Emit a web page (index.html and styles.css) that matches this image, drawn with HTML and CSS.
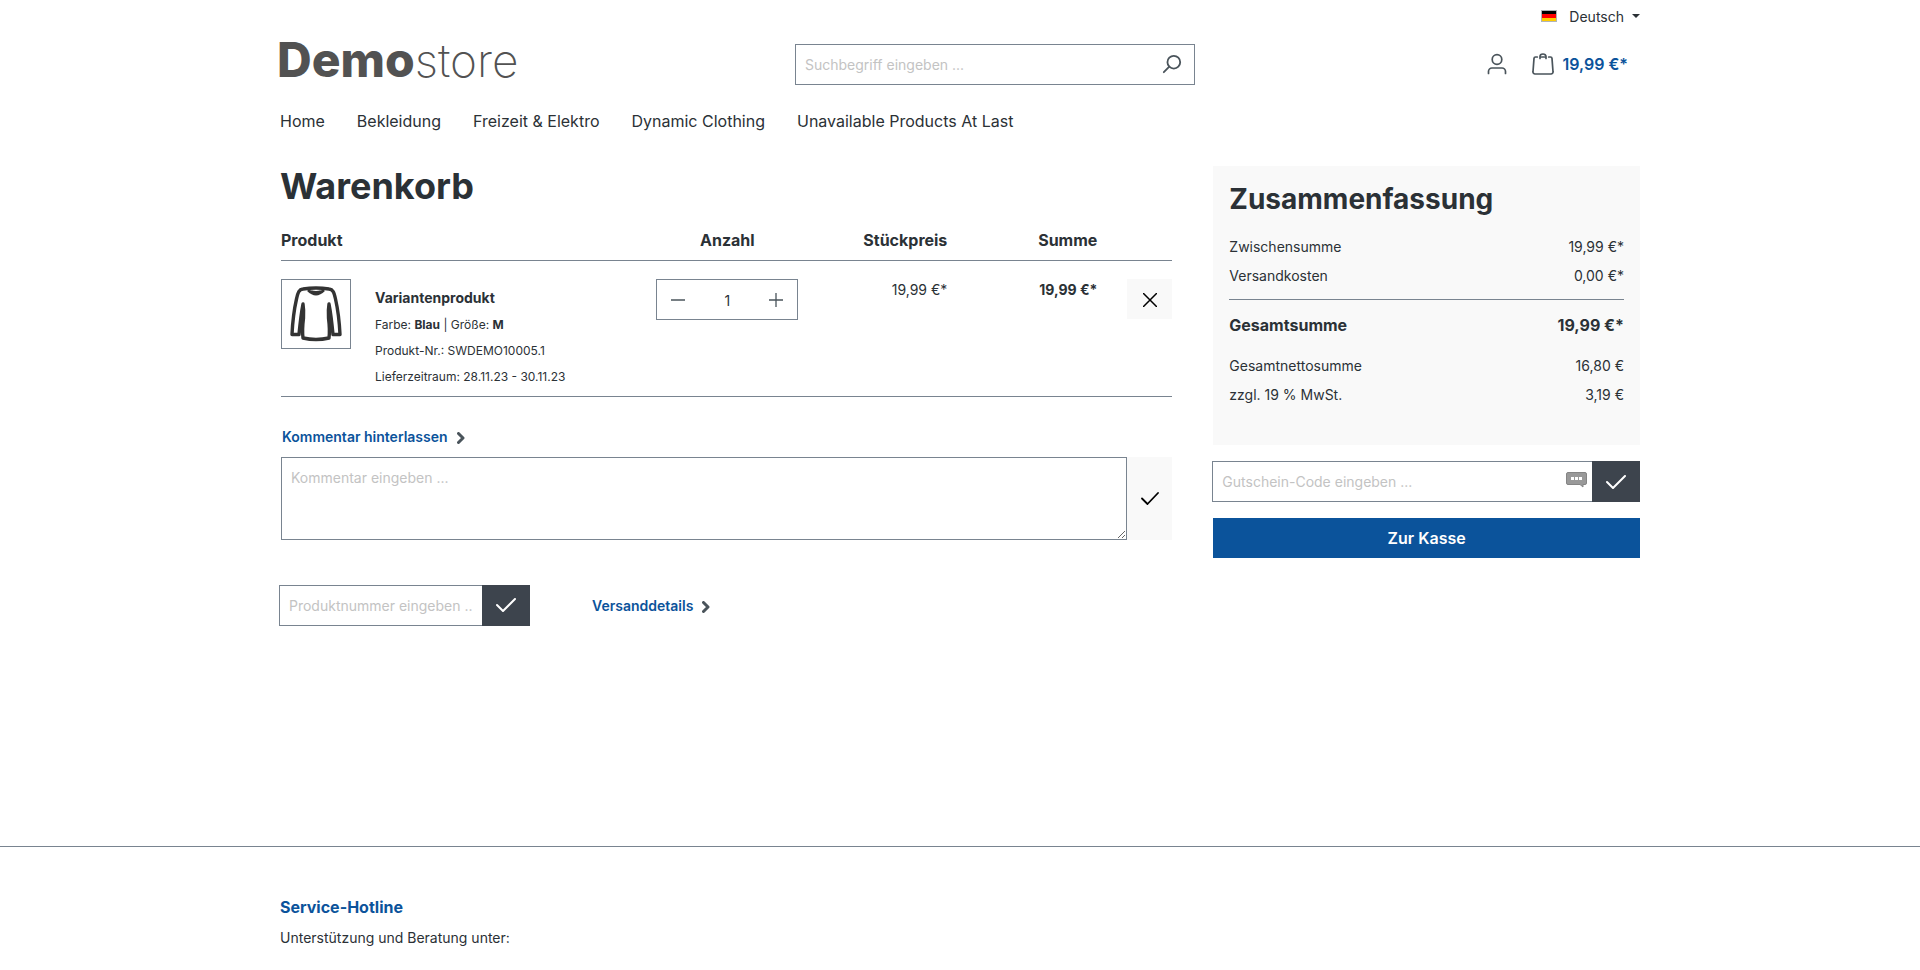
FILE: index.html
```html
<!DOCTYPE html>
<html lang="de">
<head>
<meta charset="utf-8">
<title>Warenkorb</title>
<meta name="viewport" content="width=device-width, initial-scale=1">
<link rel="stylesheet" href="styles.css">
</head>
<body>
<header class="container header">
  <div class="top-bar">
    <button class="language" type="button">
      <svg class="flag" viewBox="0 0 16 12" width="16" height="12" aria-hidden="true"><path fill="#b0b4b8" d="M0 0h16v12H0z"/><path d="M1 1h14v3H1z"/><path fill="#f00" d="M1 4h14v4H1z"/><path fill="#fc0" d="M1 8h14v3H1z"/></svg>
      <span>Deutsch</span>
      <span class="caret"></span>
    </button>
  </div>
  <div class="header-row">
    <a class="logo" href="#"><b>Demo</b>store</a>
    <form class="search" role="search">
      <input type="search" placeholder="Suchbegriff eingeben ..." aria-label="Suchbegriff">
      <button type="button" aria-label="Suchen">
        <svg class="stroke" viewBox="0 0 22 22" width="22" height="22" stroke-width="2"><circle cx="13" cy="9" r="7"/><path d="M8 14l-6 6"/></svg>
      </button>
    </form>
    <div class="actions">
      <button class="account" type="button" aria-label="Mein Konto">
        <svg class="stroke" viewBox="0 0 22 22" width="22" height="22" stroke-width="1.700"><circle cx="11" cy="6.500" r="4.800"/><path d="M2.500 20.500v-2a3.500 3.500 0 0 1 3.500-3.500h10a3.500 3.500 0 0 1 3.500 3.500v2"/></svg>
      </button>
      <a class="cart-link" href="#">
        <svg class="stroke" viewBox="0 0 22 22" width="22" height="22" stroke-width="1.700"><path d="M5.300 4H3.500a1.500 1.500 0 0 0-1.500 1.400l-1 13.300A2 2 0 0 0 3 21h16a2 2 0 0 0 2-2.300L20 5.400a1.500 1.500 0 0 0-1.500-1.400h-1.800M8 5.500V3.600a3 2.600 0 0 1 6 0v1.900M9.500 4h3"/></svg>
        <span>19,99 €*</span>
      </a>
    </div>
  </div>
  <nav class="nav">
    <a href="#">Home</a>
    <a href="#">Bekleidung</a>
    <a href="#">Freizeit &amp; Elektro</a>
    <a href="#">Dynamic Clothing</a>
    <a href="#">Unavailable Products At Last</a>
  </nav>
</header>

<main class="checkout">
  <section class="cart">
    <h1>Warenkorb</h1>
    <table class="items">
      <colgroup><col><col class="col-quantity"><col class="col-unit"><col class="col-total"><col class="col-remove"></colgroup>
      <thead>
        <tr><th>Produkt</th><th class="center">Anzahl</th><th class="right">Stückpreis</th><th class="right">Summe</th><td></td></tr>
      </thead>
      <tbody>
        <tr>
          <td>
            <div class="product">
              <a class="thumb" href="#" aria-label="Variantenprodukt">
                <svg viewBox="0 0 68 68" width="68" height="68" fill="none" stroke="#333" stroke-width="3.400" stroke-linejoin="round"><path d="M21 24C19 34 18 44 17 54.500H10C10.500 44 12 30 14.500 19 16 12 17 9.500 21 9q13-2 26 0c4 .5 5 3 6.500 10C56 30 57.500 44 58 54.500H51C50 44 49 34 47 24q-1 6-.5 14 1.500 12 .5 20-13 3-26 0-1-8 .5-20 .5-8-.5-14z"/><path d="M26 10q8 8 16 0M29 11.500q5 1.500 10 0" stroke-width="2.600"/></svg>
              </a>
              <div class="details">
                <a class="name" href="#">Variantenprodukt</a>
                <p>Farbe: <b>Blau</b> | Größe: <b>M</b></p>
                <p>Produkt-Nr.: SWDEMO10005.1</p>
                <p>Lieferzeitraum: 28.11.23 - 30.11.23</p>
              </div>
            </div>
          </td>
          <td>
            <div class="quantity">
              <button type="button" aria-label="Menge verringern"><svg class="stroke" viewBox="0 0 14 14" width="14" height="14" stroke-width="1.300"><path d="M0 7h14"/></svg></button>
              <input type="text" inputmode="numeric" value="1" aria-label="Anzahl">
              <button type="button" aria-label="Menge erhöhen"><svg class="stroke" viewBox="0 0 14 14" width="14" height="14" stroke-width="1.300"><path d="M0 7h14M7 0v14"/></svg></button>
            </div>
          </td>
          <td class="right price">19,99 €*</td>
          <td class="right price total">19,99 €*</td>
          <td class="right"><button class="remove" type="button" aria-label="Entfernen"><svg viewBox="0 0 14 14" width="14" height="14" fill="none" stroke="#000" stroke-width="1.500" stroke-linecap="round"><path d="M.5.500l13 13M13.500.500l-13 13"/></svg></button></td>
        </tr>
      </tbody>
    </table>

    <form class="comment">
      <label class="toggle" for="comment">Kommentar hinterlassen
        <svg class="chevron" viewBox="0 0 8 12" width="8" height="12"><path d="M1.500 1.500L6 6l-4.500 4.500"/></svg>
      </label>
      <div class="comment-row">
        <textarea id="comment" placeholder="Kommentar eingeben ..."></textarea>
        <button type="button" aria-label="Kommentar speichern"><svg viewBox="0 0 18 13" width="18" height="13" fill="none" stroke="#000" stroke-width="1.800" stroke-linecap="round" stroke-linejoin="round"><path d="M1 6.500l5.500 5.500L17 1"/></svg></button>
      </div>
    </form>

    <div class="cart-actions">
      <form class="code-form add-product">
        <input type="text" placeholder="Produktnummer eingeben ..." aria-label="Produktnummer">
        <button type="button" aria-label="Produkt hinzufügen"><svg viewBox="0 0 20 14" width="20" height="14"><path d="M1 7l6 6L19 1"/></svg></button>
      </form>
      <a class="toggle" href="#">Versanddetails
        <svg class="chevron" viewBox="0 0 8 12" width="8" height="12"><path d="M1.500 1.500L6 6l-4.500 4.500"/></svg>
      </a>
    </div>
  </section>

  <aside class="side">
    <section class="summary">
      <h2>Zusammenfassung</h2>
      <dl>
        <div><dt>Zwischensumme</dt><dd>19,99 €*</dd></div>
        <div><dt>Versandkosten</dt><dd>0,00 €*</dd></div>
        <div class="grand"><dt>Gesamtsumme</dt><dd>19,99 €*</dd></div>
        <div><dt>Gesamtnettosumme</dt><dd>16,80 €</dd></div>
        <div><dt>zzgl. 19 % MwSt.</dt><dd>3,19 €</dd></div>
      </dl>
    </section>
    <form class="code-form voucher">
      <div class="voucher-field">
        <input type="text" placeholder="Gutschein-Code eingeben ..." aria-label="Gutschein-Code">
        <svg class="bubble" viewBox="0 0 21 16" width="21" height="16" aria-hidden="true"><path fill="#999" stroke="#858585" d="M2 .500h17a1.500 1.500 0 0 1 1.500 1.500v9a1.500 1.500 0 0 1-1.500 1.500h-2V15l-3-2.500H2A1.500 1.500 0 0 1 .5 11V2A1.500 1.500 0 0 1 2 .500z"/><path fill="#fff" d="M5 5h3v3H5zM9 5h3v3H9zM13 5h3v3h-3z"/></svg>
      </div>
      <button type="button" aria-label="Gutschein einlösen"><svg viewBox="0 0 20 14" width="20" height="14"><path d="M1 7l6 6L19 1"/></svg></button>
    </form>
    <button class="checkout-button" type="button">Zur Kasse</button>
  </aside>
</main>

<footer class="footer">
  <div class="container">
    <h3>Service-Hotline</h3>
    <p>Unterstützung und Beratung unter:</p>
  </div>
</footer>
</body>
</html>
```
FILE: styles.css
```css
:root {
  --text: #2b3136;
  --border: #798490;
  --blue: #0b539b;
  --dark: #3d444d;
  --icon: #4a545b;
  --light: #f9f9f9;
}

*,
*::before,
*::after {
  box-sizing: border-box;
}

body {
  margin: 0;
  background: #fff;
  color: var(--text);
  font: 14px/21px Inter, "Liberation Sans", sans-serif;
  overflow-x: hidden;
}

h1, h2, h3, p, dl, dd {
  margin: 0;
}

a {
  color: inherit;
  text-decoration: none;
}

button, input, textarea {
  font: inherit;
  color: inherit;
  border: 0;
  border-radius: 0;
  background: none;
  outline: 0;
}

button {
  display: flex;
  align-items: center;
  justify-content: center;
  padding: 0;
  cursor: pointer;
}

input::placeholder,
textarea::placeholder {
  color: #c3c3c3;
  opacity: 1;
}

svg {
  display: block;
  flex: none;
}

.stroke {
  fill: none;
  stroke: var(--icon);
  stroke-linecap: round;
  stroke-linejoin: round;
}

.container {
  width: 100%;
  max-width: 1400px;
  margin: 0 auto;
  padding: 0 20px;
}

/* Header */
.top-bar {
  display: flex;
  justify-content: flex-end;
  height: 32px;
}

.language {
  height: 32px;
}

.flag {
  margin-right: 12px;
}

.caret {
  margin-left: 8px;
  border: 4px solid transparent;
  border-top-color: currentColor;
  border-bottom: 0;
}

.header-row {
  display: grid;
  grid-template-columns: 1fr 400px 1fr;
  align-items: center;
  height: 62px;
}

.logo {
  justify-self: start;
  margin-left: -3px;
  padding-bottom: 8px;
  color: #525252;
  font-size: 46px;
  line-height: 56px;
  font-weight: 200;
}

.logo b {
  font-size: 48px;
  font-weight: 800;
}

.search {
  display: flex;
  width: 400px;
  height: 41px;
  margin-left: 35px;
  border: 1px solid var(--border);
}

.search input {
  flex: 1;
  min-width: 0;
  padding: 0 9px;
}

.search button {
  width: 44px;
}

.search svg {
  width: 20px;
  height: 20px;
}

.actions {
  display: flex;
  justify-content: flex-end;
  align-items: center;
  gap: 24px;
  padding-right: 12px;
}

.cart-link {
  display: flex;
  align-items: center;
  gap: 9px;
  color: var(--blue);
  font-size: 16px;
  font-weight: 600;
}

.nav {
  display: flex;
  gap: 32px;
  padding: 15px 0 14px;
  font-size: 16px;
  line-height: 24px;
}

/* Cart */
.checkout {
  display: grid;
  grid-template-columns: minmax(0, 2fr) minmax(0, 1fr);
  align-items: start;
  max-width: 1400px;
  min-height: 699px;
  margin: 0 auto;
  padding-top: 19px;
}

.cart {
  padding: 0 21px;
}

.side {
  padding: 0 20px;
}

h1 {
  margin-left: -1px;
  font-size: 36px;
  line-height: 40px;
  font-weight: 700;
}

.items {
  width: 100%;
  margin-top: 14px;
  border-collapse: collapse;
  table-layout: fixed;
}

.col-quantity { width: 142px; }
.col-unit { width: 149px; }
.col-total { width: 150px; }
.col-remove { width: 75px; }

.items th,
.items td {
  padding: 0;
  text-align: left;
  vertical-align: top;
}

.items th {
  height: 40px;
  padding-top: 8px;
  font-size: 16px;
  line-height: 24px;
  font-weight: 700;
}

.items tr {
  border-bottom: 1px solid var(--border);
}

.items .center { text-align: center; }
.items .right { text-align: right; }

.items tbody td {
  padding-top: 18px;
}

.total {
  font-weight: 700;
}

.product {
  display: flex;
  gap: 24px;
}

.thumb {
  flex: none;
  align-self: flex-start;
  border: 1px solid var(--border);
}

.details {
  padding: 6px 0;
  font-size: 12px;
  line-height: 26px;
}

.name {
  display: block;
  padding-bottom: 1px;
  font-size: 14px;
  font-weight: 700;
}

.details b {
  font-weight: 700;
}

.quantity {
  display: flex;
  height: 41px;
  border: 1px solid var(--border);
}

.quantity button {
  flex: none;
  width: 42px;
  padding-top: 2px;
}

.quantity input {
  flex: 1;
  min-width: 0;
  padding: 2px 0 0;
  text-align: center;
}

.remove {
  width: 45px;
  height: 40px;
  margin-left: auto;
  padding-top: 2px;
  background: var(--light);
}

/* Comment */
.comment {
  margin-top: 29px;
}

.toggle {
  display: inline-flex;
  align-items: center;
  gap: 9px;
  color: var(--blue);
  font-weight: 600;
}

.comment .toggle {
  padding-left: 1px;
  margin-bottom: 10px;
}

.chevron {
  margin-top: 3px;
  fill: none;
  stroke: var(--icon);
  stroke-width: 3;
  stroke-linejoin: round;
  stroke-linecap: round;
}

.comment-row {
  display: flex;
}

.comment textarea {
  flex: 1;
  min-width: 0;
  height: 83px;
  padding: 9px;
  border: 1px solid var(--border);
  resize: vertical;
}

.comment button {
  width: 45px;
  background: var(--light);
}

.cart-actions {
  display: flex;
  align-items: center;
  gap: 62px;
  margin: 45px 0 0 -2px;
}

.code-form {
  display: flex;
}

.code-form input {
  width: 100%;
  height: 41px;
  padding: 0 9px;
  border: 1px solid var(--border);
  border-right: 0;
}

.code-form button {
  flex: none;
  width: 48px;
  background: var(--dark);
}

.code-form button svg {
  fill: none;
  stroke: #fff;
  stroke-width: 2;
  stroke-linecap: round;
  stroke-linejoin: round;
}

.add-product {
  width: 251px;
}

/* Summary */
.summary {
  padding: 16px 16px 36px;
  background: var(--light);
}

.summary h2 {
  margin-bottom: 16px;
  font-size: 28px;
  line-height: 34px;
  font-weight: 700;
}

.summary dl div {
  display: flex;
  justify-content: space-between;
  padding: 4px 0;
}

.summary dl .grand {
  margin: 9px 0 14px;
  padding: 13px 0 0;
  border-top: 1px solid var(--border);
  font-size: 16px;
  line-height: 24px;
  font-weight: 700;
}

.voucher {
  margin: 16px 0 16px -1px;
}

.voucher-field {
  position: relative;
  flex: 1;
}

.bubble {
  position: absolute;
  right: 5px;
  top: 11px;
}

.checkout-button {
  width: 100%;
  height: 40px;
  background: var(--blue);
  color: #fff;
  font-size: 16px;
  font-weight: 600;
}

/* Footer */
.footer {
  padding: 48px 0 20px;
  border-top: 1px solid var(--border);
}

.footer h3 {
  margin-bottom: 8px;
  color: var(--blue);
  font-size: 16px;
  line-height: 24px;
  font-weight: 700;
}
```
